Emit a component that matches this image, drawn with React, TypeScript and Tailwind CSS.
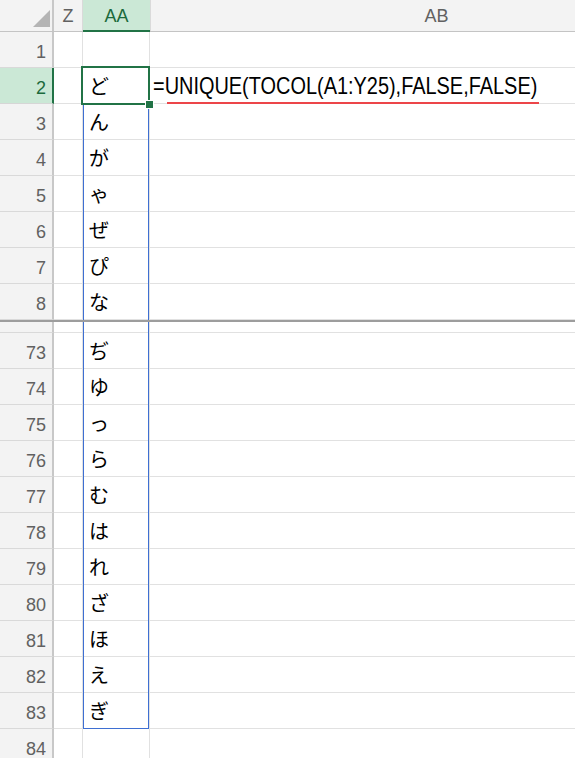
import React from "react";

const topRows: [number, string][] = [
  [1, ""],
  [2, "ど"],
  [3, "ん"],
  [4, "が"],
  [5, "ゃ"],
  [6, "ぜ"],
  [7, "ぴ"],
  [8, "な"],
];

const bottomRows: [number, string][] = [
  [73, "ぢ"],
  [74, "ゆ"],
  [75, "っ"],
  [76, "ら"],
  [77, "む"],
  [78, "は"],
  [79, "れ"],
  [80, "ざ"],
  [81, "ほ"],
  [82, "え"],
  [83, "ぎ"],
  [84, ""],
];

const numFont = { fontFamily: '"Liberation Sans", Arial, sans-serif' };
const kanaFont = { fontFamily: '"Noto Sans CJK JP", "Noto Sans", sans-serif' };

function Row({ num, kana, partial }: { num: number; kana: string; partial?: boolean }) {
  const active = num === 2;
  const selected = num >= 3 && num <= 83;
  const lastSel = num === 83;
  return (
    <div className={partial ? "flex h-[11px] shrink-0" : "flex h-[36px] shrink-0"}>
      <div
        className={
          active
            ? "w-[54px] shrink-0 bg-[#cbe8d6] border-r-2 border-r-[#217346] border-b border-b-[#d6d6d6] flex items-center justify-end pr-[6px] pt-[6px] text-[18px] text-[#1b6a3c]"
            : "w-[54px] shrink-0 bg-[#f3f3f3] border-r-2 border-r-[#c8c8c8] border-b border-b-[#d9d9d9] flex items-center justify-end pr-[6px] pt-[6px] text-[18px] text-[#616161]"
        }
        style={numFont}
      >
        {partial ? "" : num}
      </div>
      <div className="w-[29px] shrink-0 border-r border-b border-[#e1e1e1]" />
      <div className="w-[67px] shrink-0 border-r border-b border-[#e1e1e1] relative flex items-center pl-[6px] pt-[1px]">
        <span className="text-[20px] text-black leading-none" style={kanaFont}>
          {kana}
        </span>
        {selected && (
          <div
            className={
              lastSel
                ? "absolute top-0 left-0 right-0 -bottom-[1px] border-l border-r border-b border-[#3e6fd2] pointer-events-none"
                : "absolute top-0 left-0 right-0 -bottom-[1px] border-l border-r border-[#3e6fd2] pointer-events-none"
            }
          />
        )}
        {active && (
          <div className="absolute z-10 -top-[2px] -left-[2px] -right-[1px] -bottom-[2px] border-2 border-[#217346]">
            <div className="absolute -right-[6px] -bottom-[6px] w-[9px] h-[9px] bg-[#217346] border border-white" />
          </div>
        )}
      </div>
      <div className="w-[572px] shrink-0 border-r border-b border-[#e1e1e1] relative flex items-center pl-[3px]">
        {active && (
          <div className="relative h-full flex items-center">
            <span
              className="text-[24px] text-black leading-none whitespace-nowrap inline-block origin-left scale-x-[0.83]"
              style={numFont}
            >
              =UNIQUE(TOCOL(A1:Y25),FALSE,FALSE)
            </span>
            <div className="absolute left-[14px] w-[372px] top-[34px] h-[2px] bg-[#ec4549]" />
          </div>
        )}
      </div>
    </div>
  );
}

export default function App() {
  return (
    <div className="w-[575px] h-[758px] overflow-hidden bg-white flex flex-col">
      <div className="flex h-[32px] shrink-0 border-b border-[#c4c4c4] bg-[#f3f3f3]">
        <div className="w-[54px] shrink-0 border-r-2 border-r-[#c8c8c8] relative">
          <svg className="absolute left-[33px] top-[10px]" width="17" height="17" viewBox="0 0 17 17">
            <polygon points="17,0 17,17 0,17" fill="#b4b4b4" />
          </svg>
        </div>
        <div
          className="w-[29px] shrink-0 border-r border-[#dadada] flex items-center justify-center pt-[2px] text-[18px] text-[#616161]"
          style={numFont}
        >
          Z
        </div>
        <div
          className="w-[67px] shrink-0 bg-[#cbe8d6] border-b-2 border-b-[#217346] -mb-[1px] flex items-center justify-center pt-[2px] text-[18px] text-[#1b6a3c]"
          style={numFont}
        >
          AA
        </div>
        <div
          className="w-[572px] shrink-0 border-l border-[#dadada] flex items-center justify-center pt-[2px] text-[18px] text-[#616161]"
          style={numFont}
        >
          AB
        </div>
      </div>
      {topRows.map(([n, k]) => (
        <Row key={n} num={n} kana={k} />
      ))}
      <div className="h-[2px] shrink-0 bg-[#9d9d9d]" />
      <Row num={72} kana="" partial />
      {bottomRows.map(([n, k]) => (
        <Row key={n} num={n} kana={k} />
      ))}
    </div>
  );
}
